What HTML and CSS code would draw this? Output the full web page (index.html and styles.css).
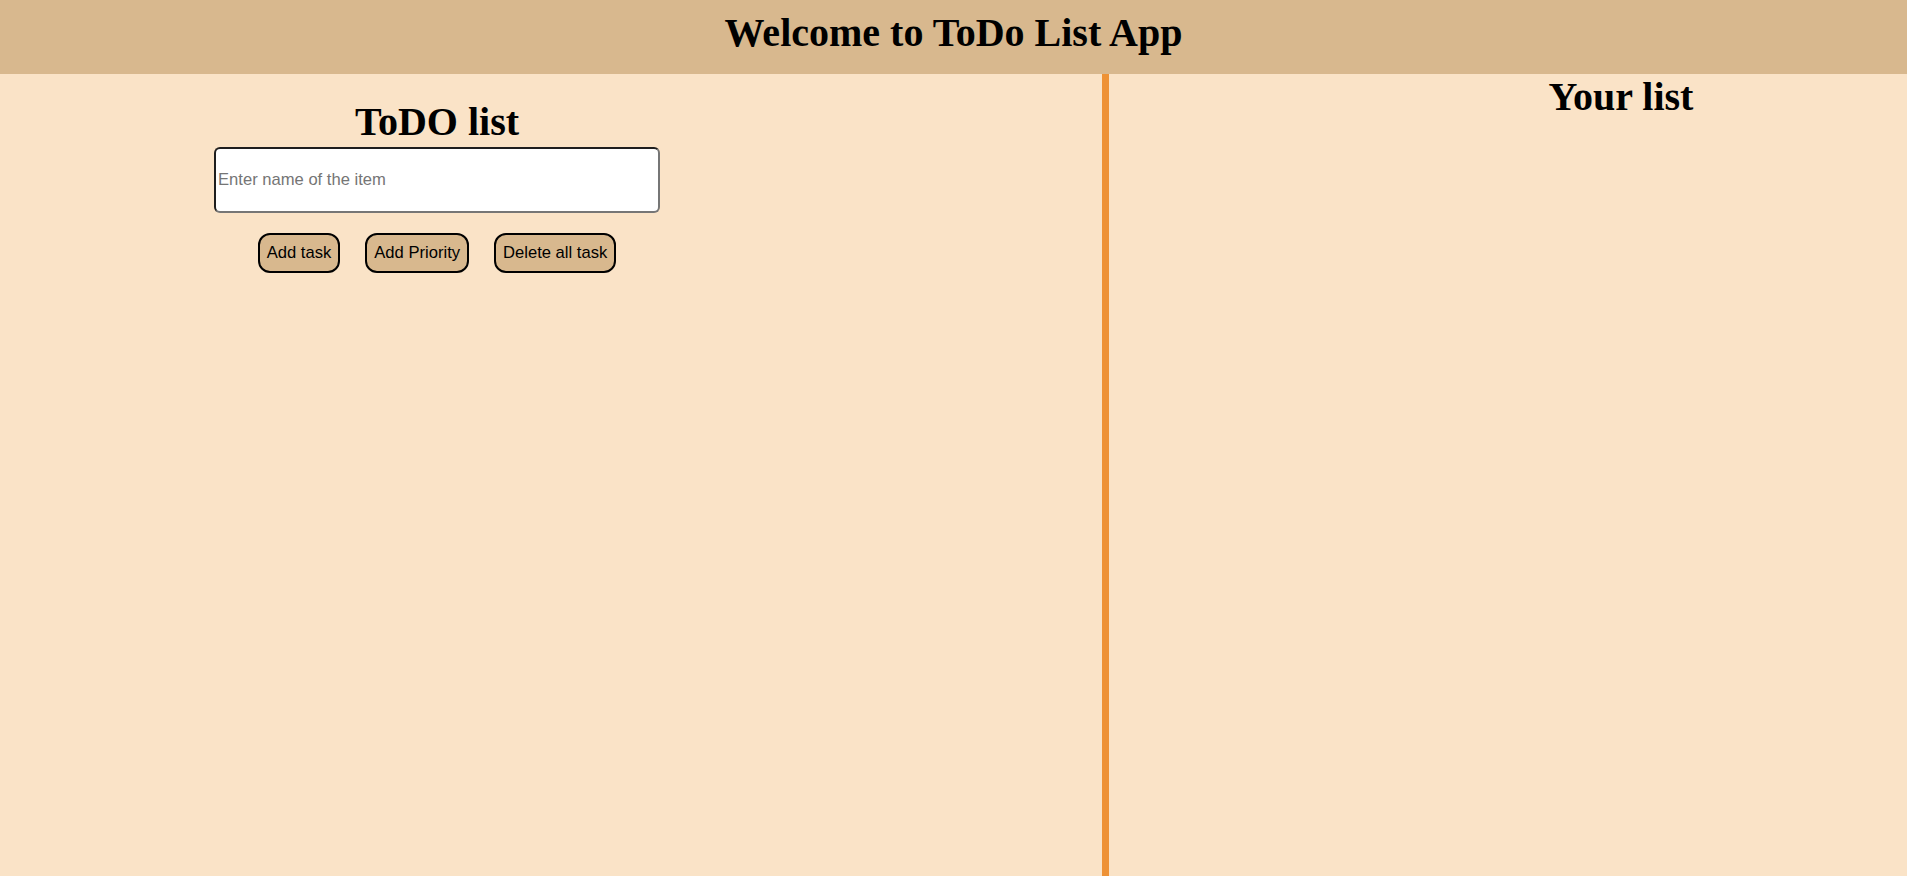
FILE: index.html
```html
<!DOCTYPE html>
<html lang="en">
<head>
<meta charset="utf-8">
<title>ToDo List App</title>
<link rel="stylesheet" href="styles.css">
</head>
<body>
  <header class="topbar">
    <h1 class="topbar-title">Welcome to ToDo List App</h1>
  </header>
  <main class="layout">
    <section class="todo">
      <div class="todo-panel">
        <h2 class="section-title todo-title">ToDO list</h2>
        <input class="todo-input" type="text" placeholder="Enter name of the item">
        <div class="actions">
          <button class="btn">Add task</button>
          <button class="btn">Add Priority</button>
          <button class="btn">Delete all task</button>
        </div>
      </div>
    </section>
    <section class="list">
      <h2 class="section-title list-title">Your list</h2>
    </section>
  </main>
</body>
</html>
```
FILE: styles.css
```css
* { box-sizing: border-box; }

html, body {
  margin: 0;
  padding: 0;
  height: 100%;
}

body {
  font-family: "Liberation Serif", "Times New Roman", serif;
  background: #fae3c7;
  color: #000;
  display: flex;
  flex-direction: column;
  overflow: hidden;
}

.topbar {
  background: #d8b88e;
  height: 74px;
  padding-top: 11px;
  flex: none;
}

.topbar-title {
  margin: 0;
  font-size: 40px;
  line-height: 44px;
  font-weight: bold;
  text-align: center;
}

.layout {
  flex: 1;
  display: flex;
  min-height: 0;
}

.todo {
  width: 1102px;
  flex: none;
  padding-right: 228px;
}

.todo-panel {
  display: flex;
  flex-direction: column;
  align-items: center;
}

.section-title {
  margin: 0;
  font-size: 40px;
  line-height: 44px;
  font-weight: bold;
  text-align: center;
}

.todo-title {
  margin-top: 26px;
  margin-bottom: 3px;
}

.todo-input {
  width: 446px;
  height: 66px;
  padding: 1px 2px;
  border: 2px solid;
  border-color: #1e1e1e #767676 #767676 #1e1e1e;
  border-radius: 6px;
  background: #fff;
  font-family: "Liberation Sans", Arial, sans-serif;
  font-size: 16.6px;
  color: #000;
  outline: none;
}

.todo-input::placeholder {
  color: #757575;
}

.actions {
  display: flex;
  gap: 25px;
  margin-top: 20px;
}

.btn {
  background: #d8b88e;
  border: 2px solid #000;
  border-radius: 12px;
  padding: 8px 7px;
  font-family: "Liberation Sans", Arial, sans-serif;
  font-size: 16.6px;
  line-height: 20px;
  color: #000;
  cursor: pointer;
}

.list {
  flex: 1;
  border-left: 7px solid #ee9236;
  padding-left: 226px;
}

.list-title {
  margin-top: 1px;
}
```
